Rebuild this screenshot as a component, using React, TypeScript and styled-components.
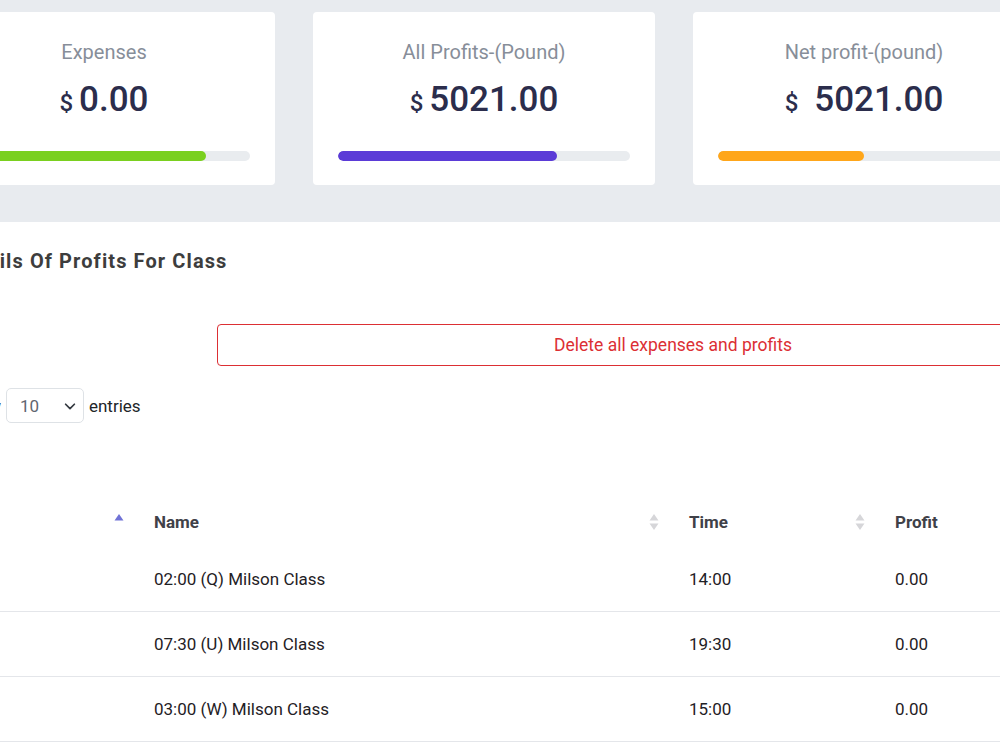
import React from 'react';
import styled, { createGlobalStyle } from 'styled-components';

const GlobalStyle = createGlobalStyle`
  html, body {
    margin: 0;
    padding: 0;
    background: #ffffff;
    overflow: hidden;
  }
  body {
    font-family: Roboto, "Liberation Sans", sans-serif;
    color: #212529;
  }
`;

const Page = styled.div`
  width: 1226px;
  margin-left: -67px;
`;

const StatsArea = styled.section`
  background-color: #e8ebef;
  padding: 12px 0 37px;
`;

const StatsGrid = styled.div`
  display: grid;
  grid-template-columns: repeat(3, 342px);
  gap: 38px;
`;

const StatCard = styled.div`
  background: #ffffff;
  border-radius: 4px;
  height: 173px;
  box-sizing: border-box;
  padding: 27px 25px 0;
  display: flex;
  flex-direction: column;
  align-items: center;
`;

const StatTitle = styled.div`
  font-size: 20px;
  line-height: 26px;
  color: #878e99;
`;

const StatValue = styled.div<{ $gap: number }>`
  margin-top: 14px;
  display: flex;
  align-items: baseline;
  gap: ${({ $gap }) => $gap}px;
  color: #2b2d4c;
  height: 42px;
`;

const Currency = styled.span`
  font-size: 24px;
  font-weight: 500;
`;

const Amount = styled.span`
  font-size: 35px;
  font-weight: 500;
  line-height: 42px;
`;

const Track = styled.div`
  margin-top: 30px;
  width: 100%;
  height: 10px;
  border-radius: 5px;
  background: #e9ecef;
  overflow: hidden;
`;

const Fill = styled.div<{ $color: string }>`
  height: 100%;
  border-radius: 5px;
  background: ${({ $color }) => $color};
`;

const Content = styled.section`
  padding: 27px 30px 0;
`;

const Heading = styled.h2`
  margin: 0 0 0 -9px;
  font-size: 20px;
  line-height: 24px;
  font-weight: 700;
  letter-spacing: 1.1px;
  color: #3d3d3d;
`;

const ButtonRow = styled.div`
  margin-top: 51px;
  padding-left: 254px;
`;

const DangerButton = styled.button`
  width: 100%;
  height: 42px;
  background: #ffffff;
  border: 1px solid #dc2f34;
  border-radius: 4px;
  color: #dc2f34;
  font-family: Roboto, "Liberation Sans", sans-serif;
  font-size: 17.5px;
  padding: 0;
`;

const LengthRow = styled.div`
  margin: 22px 0 0 -4px;
  display: flex;
  align-items: center;
  gap: 5px;
  font-size: 17px;
  color: #212529;
`;

const SelectBox = styled.div`
  width: 78px;
  height: 35px;
  box-sizing: border-box;
  border: 1px solid #dee2e6;
  border-radius: 5px;
  display: flex;
  align-items: center;
  justify-content: space-between;
  padding: 0 6px 0 13px;
  color: #5f6670;
  font-size: 17px;
`;

const Table = styled.table`
  margin-top: 73px;
  width: 1166px;
  table-layout: fixed;
  border-collapse: collapse;
  font-size: 17px;
`;

const HeadCell = styled.th<{ $width?: number }>`
  box-sizing: border-box;
  width: ${({ $width }) => ($width ? `${$width}px` : 'auto')};
  height: 51px;
  padding: 0 16px 0 14px;
  text-align: left;
  font-weight: 700;
  color: #3f4148;
`;

const HeadInner = styled.div`
  display: flex;
  align-items: center;
  justify-content: space-between;
`;

const Cell = styled.td`
  height: 64px;
  padding: 0 14px;
  border-bottom: 1px solid #e4e6ea;
  color: #1f2125;
`;

const SortIcon = ({ active }: { active?: boolean }) => (
  <svg width="10" height="18" viewBox="0 0 10 18">
    <polygon points="5,1 9.5,7.5 0.5,7.5" fill={active ? '#7072d6' : '#d6d6d9'} />
    {!active && <polygon points="5,17 9.5,10.5 0.5,10.5" fill="#d6d6d9" />}
  </svg>
);

const Chevron = () => (
  <svg width="14" height="14" viewBox="0 0 16 16">
    <path d="M3 6l5 5 5-5" fill="none" stroke="#343a40" strokeWidth="2" strokeLinecap="round" strokeLinejoin="round" />
  </svg>
);

const stats = [
  { title: 'Expenses', amount: '0.00', gap: 6, pct: 85, color: '#7ad01f' },
  { title: 'All Profits-(Pound)', amount: '5021.00', gap: 6, pct: 75, color: '#5b3bd7' },
  { title: 'Net profit-(pound)', amount: '5021.00', gap: 16, pct: 50, color: '#ffa61a' },
];

const rows = [
  { name: '02:00 (Q) Milson Class', time: '14:00', profit: '0.00' },
  { name: '07:30 (U) Milson Class', time: '19:30', profit: '0.00' },
  { name: '03:00 (W) Milson Class', time: '15:00', profit: '0.00' },
];

const App = () => (
  <Page>
    <GlobalStyle />
    <StatsArea>
      <StatsGrid>
        {stats.map((s) => (
          <StatCard key={s.title}>
            <StatTitle>{s.title}</StatTitle>
            <StatValue $gap={s.gap}>
              <Currency>$</Currency>
              <Amount>{s.amount}</Amount>
            </StatValue>
            <Track>
              <Fill $color={s.color} style={{ width: `${s.pct}%` }} />
            </Track>
          </StatCard>
        ))}
      </StatsGrid>
    </StatsArea>
    <Content>
      <Heading>Details Of Profits For Class</Heading>
      <ButtonRow>
        <DangerButton>Delete all expenses and profits</DangerButton>
      </ButtonRow>
      <LengthRow>
        Show
        <SelectBox>
          10
          <Chevron />
        </SelectBox>
        entries
      </LengthRow>
      <Table>
        <thead>
          <tr>
            <HeadCell $width={177}>
              <HeadInner>
                #
                <SortIcon active />
              </HeadInner>
            </HeadCell>
            <HeadCell $width={535}>
              <HeadInner>
                Name
                <SortIcon />
              </HeadInner>
            </HeadCell>
            <HeadCell $width={206}>
              <HeadInner>
                Time
                <SortIcon />
              </HeadInner>
            </HeadCell>
            <HeadCell>
              <HeadInner>Profit</HeadInner>
            </HeadCell>
          </tr>
        </thead>
        <tbody>
          {rows.map((r, i) => (
            <tr key={r.name}>
              <Cell>{i + 1}</Cell>
              <Cell>{r.name}</Cell>
              <Cell>{r.time}</Cell>
              <Cell>{r.profit}</Cell>
            </tr>
          ))}
        </tbody>
      </Table>
    </Content>
  </Page>
);

export default App;
